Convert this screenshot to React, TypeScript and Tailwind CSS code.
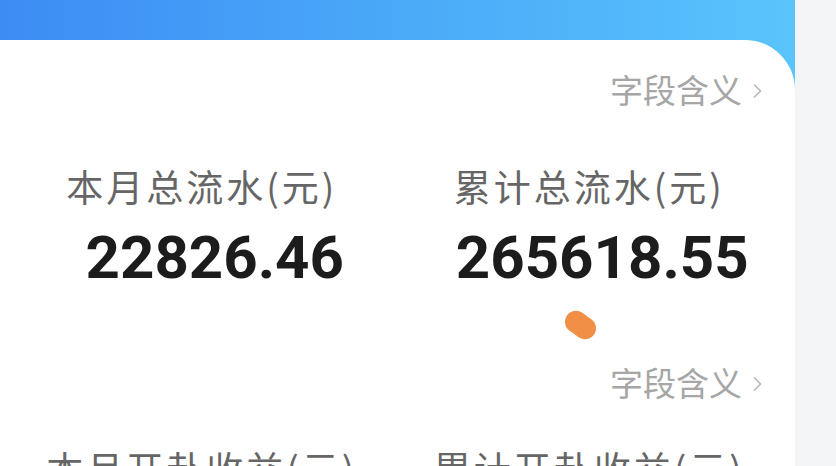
import React from "react";

const cjk = { fontFamily: '"Noto Sans CJK SC", "Noto Sans", sans-serif' };
const num = { fontFamily: 'Roboto, "Liberation Sans", sans-serif' };

function FieldLink() {
    return (
        <div className="flex justify-end items-center pr-[32px] h-[33px]">
            <span className="text-[33px] leading-[33px] text-[#a6a6a6]" style={cjk}>
                字段含义
            </span>
            <svg width="11" height="16" viewBox="0 0 11 16" className="ml-[10px] mt-[2px]">
                <polyline points="2,1.5 8.5,8 2,14.5" fill="none" stroke="#b8b8b8" strokeWidth="1.6" />
            </svg>
        </div>
    );
}

function Stat({ label, value }: { label: string; value?: string }) {
    return (
        <div className="flex flex-col items-center">
            <div className="text-[37px] leading-[37px] h-[37px] tracking-[3px] text-[#666666] whitespace-nowrap" style={cjk}>
                {label}
            </div>
            {value && (
                <div className="mt-[23px] pl-[26px] text-[60px] leading-[60px] h-[60px] font-bold text-[#1c1c1c]" style={num}>
                    {value}
                </div>
            )}
        </div>
    );
}

export default function App() {
    return (
        <div className="w-[836px] h-[466px] overflow-hidden flex bg-[#f4f5f7]">
            <div className="w-[795px] h-full flex flex-col pt-[40px] bg-linear-to-r from-[#3d8cf4] via-[#4aa9f8] to-[#5ac4fc]">
                <div className="relative flex-1 bg-white rounded-tr-[50px] pl-[8px] pr-0">
                    <div className="mt-[33px]">
                        <FieldLink />
                    </div>

                    <div className="grid grid-cols-2 mt-[62px] pr-[12px]">
                        <Stat label="本月总流水(元)" value="22826.46" />
                        <Stat label="累计总流水(元)" value="265618.55" />
                    </div>

                    <div className="absolute left-[564px] top-[274px] w-[33px] h-[22px] rounded-full bg-[#f08f45] rotate-[35deg]" />

                    <div className="mt-[78px]">
                        <FieldLink />
                    </div>

                    <div className="grid grid-cols-2 mt-[51px] pr-[12px]">
                        <Stat label="本月开卦收益(元)" />
                        <Stat label="累计开卦收益(元)" />
                    </div>
                </div>
            </div>
        </div>
    );
}
